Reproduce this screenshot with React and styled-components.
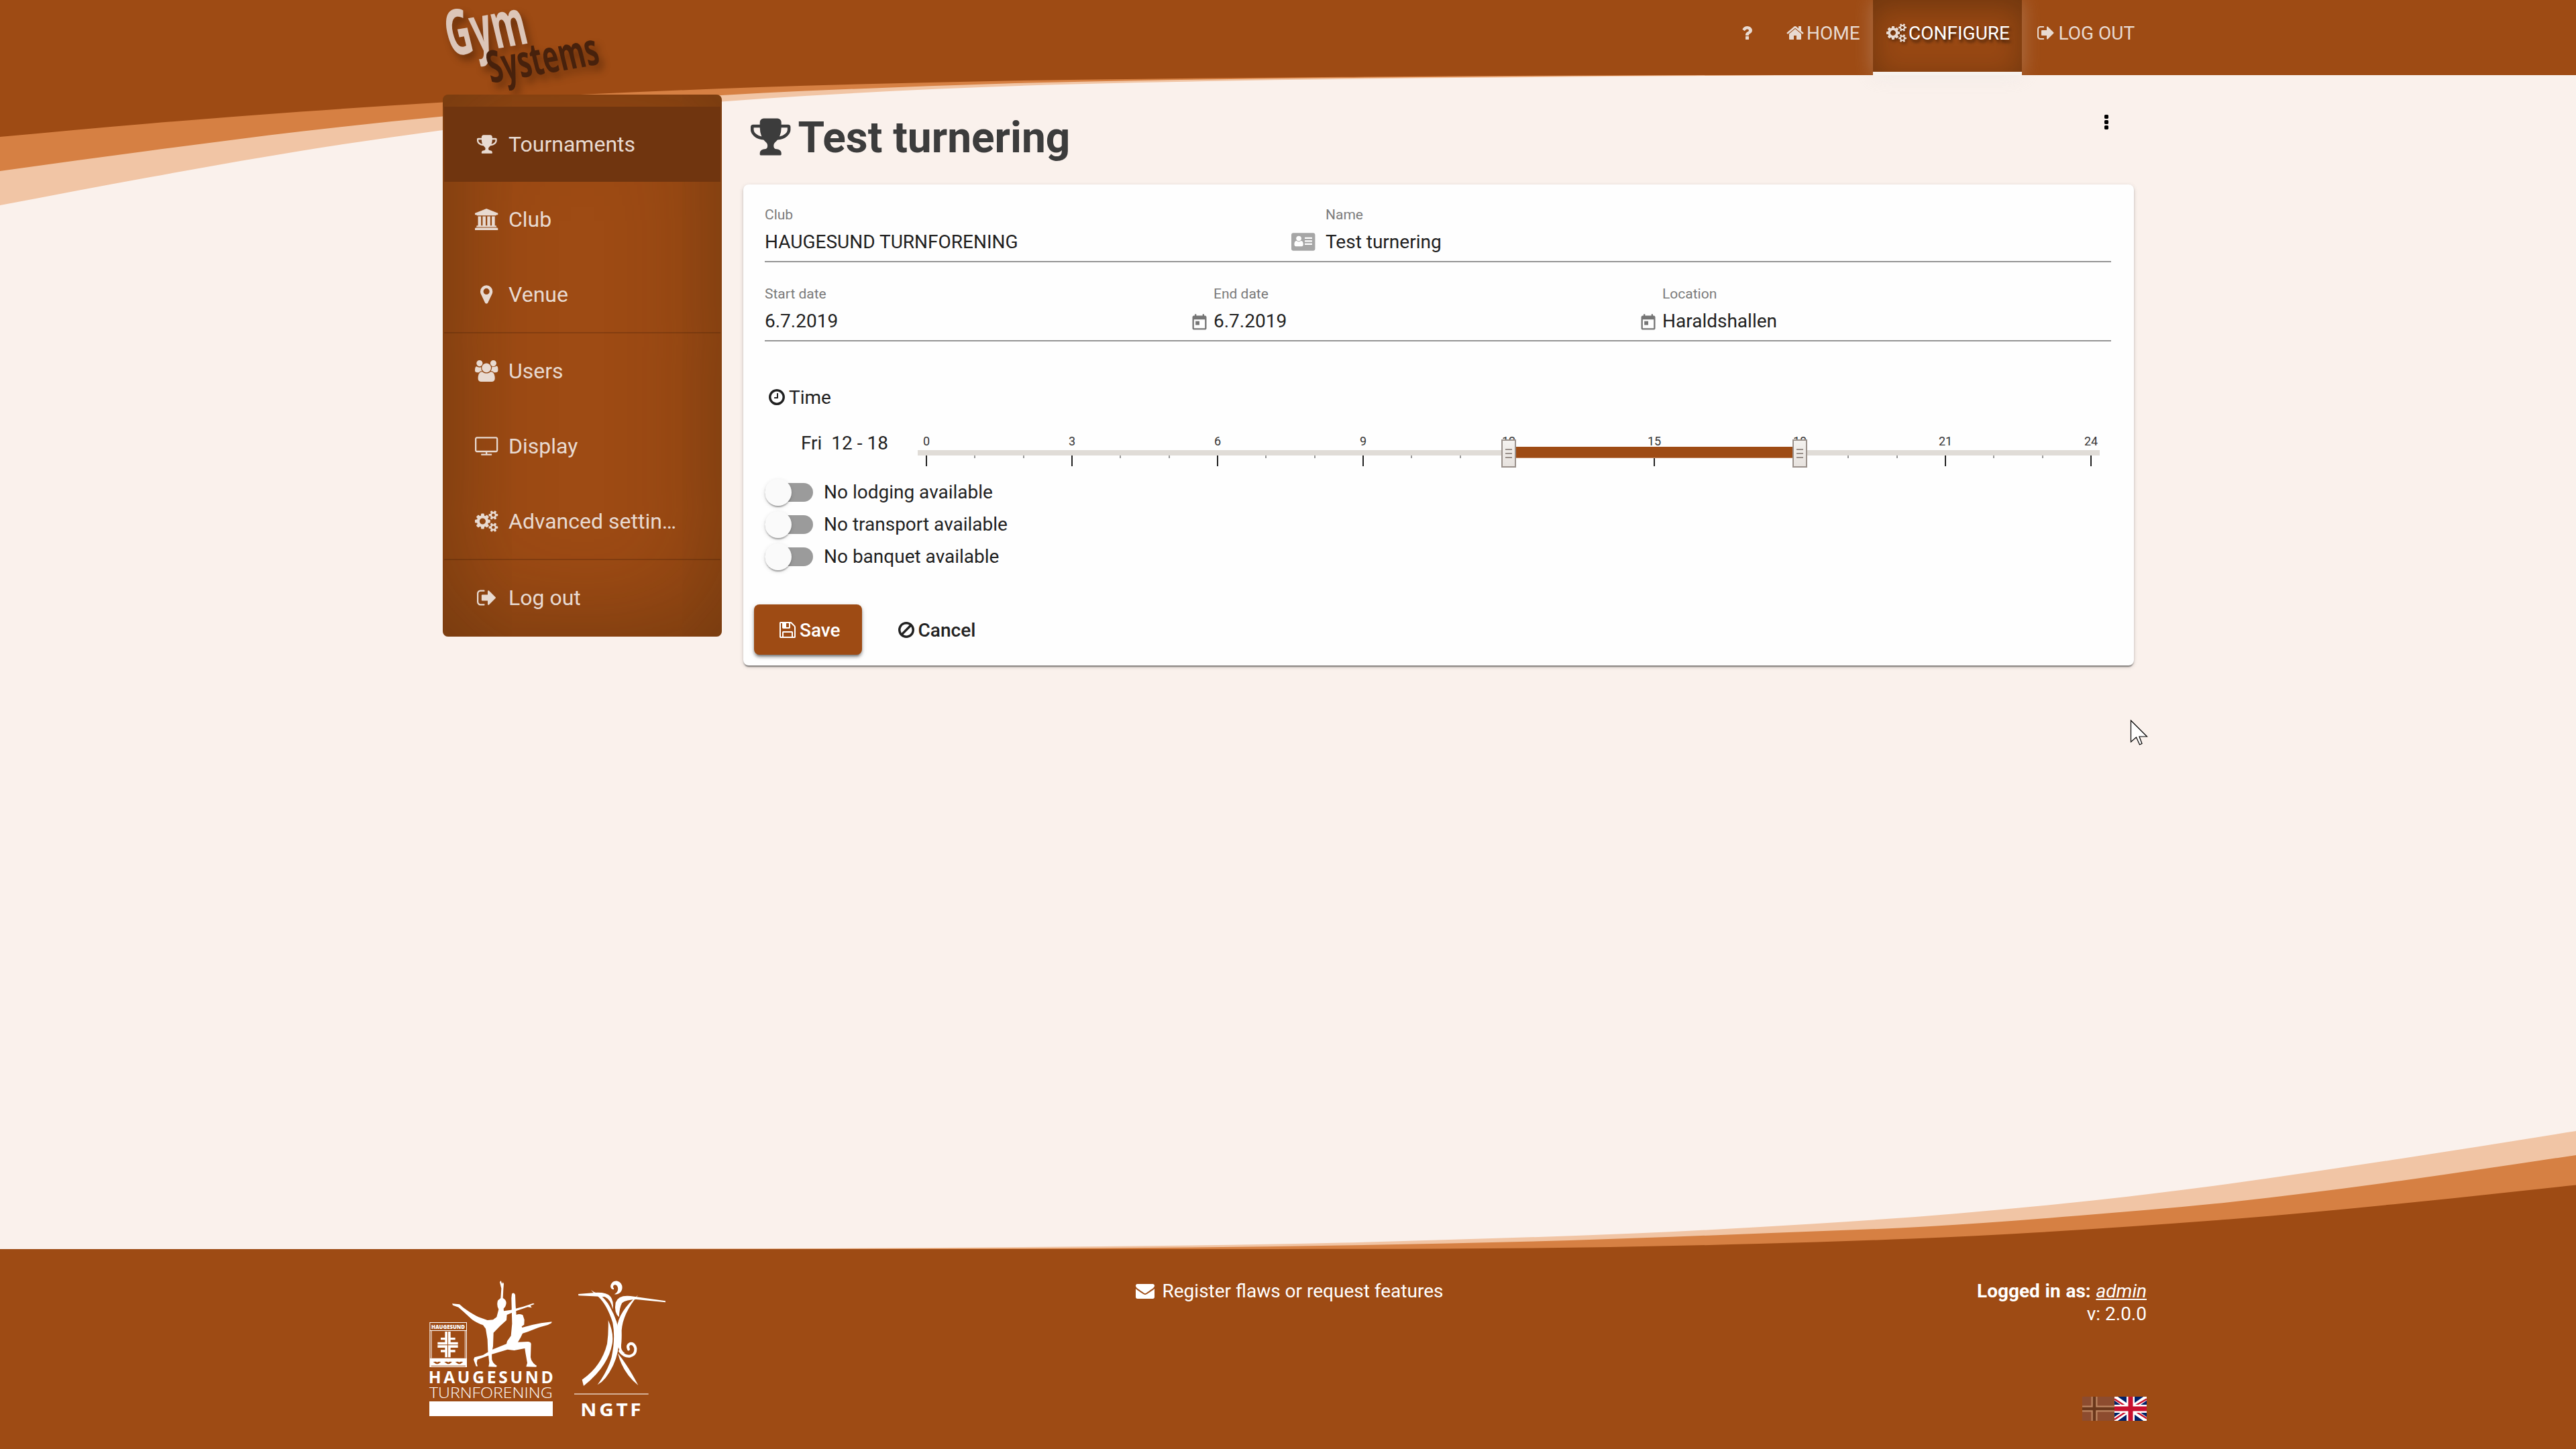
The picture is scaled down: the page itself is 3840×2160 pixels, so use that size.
import React from "react";
import styled, { createGlobalStyle, css } from "styled-components";

const color = {
  primary: "#9e4b14",
  mid: "#d68043",
  light: "#f1c5a5",
  page: "#faf1ec",
  onPrimary: "#e8dad1",
  text: "#212121",
};

const GlobalStyle = createGlobalStyle`
  * { box-sizing: border-box; }
  body {
    margin: 0;
    background: ${color.page};
    font-family: Roboto, "Liberation Sans", sans-serif;
    font-size: 28px;
    line-height: 34px;
    color: ${color.text};
    overflow: hidden;
  }
`;

/* ---------- icons ---------- */

const GLYPHS = {
  trophy: [64, 1664, "M522 883q-74-162-74-371h-256v96q0 78 94.5 162t235.5 113zm1078-275v-96h-256q0 209-74 371 141-29 235.5-113t94.5-162zm128-128v128q0 71-41.5 143t-112 130-173 97.5-215.5 44.5q-42 54-95 95-38 34-52.5 72.5t-14.5 89.5q0 54 30.5 91t97.5 37q75 0 133.5 45.5t58.5 114.5v64q0 14-9 23t-23 9h-832q-14 0-23-9t-9-23v-64q0-69 58.5-114.5t133.5-45.5q67 0 97.5-37t30.5-91q0-51-14.5-89.5t-52.5-72.5q-53-41-95-95-113-5-215.5-44.5t-173-97.5-112-130-41.5-143v-128q0-40 28-68t68-28h288v-96q0-66 47-113t113-47h576q66 0 113 47t47 113v96h288q40 0 68 28t28 68z"],
  bank: [0, 1920, "M960 0l960 384v128h-128q0 26-20.5 45t-48.5 19h-1526q-28 0-48.5-19t-20.5-45h-128v-128zm-704 640h256v768h128v-768h256v768h128v-768h256v768h128v-768h256v768h59q28 0 48.5 19t20.5 45v64h-1664v-64q0-26 20.5-45t48.5-19h59v-768zm1595 960q28 0 48.5 19t20.5 45v128h-1920v-128q0-26 20.5-45t48.5-19h1782z"],
  marker: [384, 1024, "M1152 640q0-106-75-181t-181-75-181 75-75 181 75 181 181 75 181-75 75-181zm256 0q0 109-33 179l-364 774q-16 33-47.5 52t-67.5 19-67.5-19-46.5-52l-365-774q-33-70-33-179 0-212 150-362t362-150 362 150 150 362z"],
  users: [64, 1920, "M657 896q-162 5-265 128h-134q-82 0-138-40.5t-56-118.5q0-353 124-353 6 0 43.5 21t97.5 42.5 119 21.5q67 0 133-23-5 37-5 66 0 159 93 293zm1071 637q0 120-73 189.5t-194 69.5h-874q-121 0-194-69.5t-73-189.5q0-53 3.5-103.5t14-109 26.5-108.5 43-97.5 62-81 85.5-53.5 111.5-20q10 0 43 21.5t73 48 107 48 135 21.5 135-21.5 107-48 73-48 43-21.5q61 0 111.5 20t85.5 53.5 62 81 43 97.5 26.5 108.5 14 109 3.5 103.5zm-1024-1277q0 106-75 181t-181 75-181-75-75-181 75-181 181-75 181 75 75 181zm704 384q0 159-112.5 271.5t-271.5 112.5-271.5-112.5-112.5-271.5 112.5-271.5 271.5-112.5 271.5 112.5 112.5 271.5zm576 225q0 78-56 118.5t-138 40.5h-134q-103-123-265-128 93-134 93-293 0-29-5-66 66 23 133 23 59 0 119-21.5t97.5-42.5 43.5-21q124 0 124 353zm-128-609q0 106-75 181t-181 75-181-75-75-181 75-181 181-75 181 75 75 181z"],
  tv: [0, 1920, "M1792 1248v-960q0-13-9.5-22.5t-22.5-9.5h-1600q-13 0-22.5 9.5t-9.5 22.5v960q0 13 9.5 22.5t22.5 9.5h1600q13 0 22.5-9.5t9.5-22.5zm128-960v960q0 66-47 113t-113 47h-736v128h352q14 0 23 9t9 23v64q0 14-9 23t-23 9h-832q-14 0-23-9t-9-23v-64q0-14 9-23t23-9h352v-128h-736q-66 0-113-47t-47-113v-960q0-66 47-113t113-47h1600q66 0 113 47t47 113z"],
  cogs: [0, 1920, "M896 896q0-106-75-181t-181-75-181 75-75 181 75 181 181 75 181-75 75-181zm768 512q0-52-38-90t-90-38-90 38-38 90q0 53 37.5 90.5t90.5 37.5 90.5-37.5 37.5-90.5zm0-1024q0-52-38-90t-90-38-90 38-38 90q0 53 37.5 90.5t90.5 37.5 90.5-37.5 37.5-90.5zm-384 421v185q0 10-7 19.5t-16 10.5l-155 24q-11 35-32 76 34 48 90 115 7 11 7 20 0 12-7 19-23 30-82.5 89.5t-78.5 59.5q-11 0-21-7l-115-90q-37 19-77 31-11 108-23 155-7 24-30 24h-186q-11 0-20-7.5t-10-17.5l-23-153q-34-10-75-31l-118 89q-7 7-20 7-11 0-21-8-144-133-144-160 0-9 7-19 10-14 41-53t47-61q-23-44-35-82l-152-24q-10-1-17-9.5t-7-19.5v-185q0-10 7-19.5t16-10.5l155-24q11-35 32-76-34-48-90-115-7-11-7-20 0-12 7-20 22-30 82-89t79-59q11 0 21 7l115 90q34-18 77-32 11-108 23-154 7-24 30-24h186q11 0 20 7.5t10 17.5l23 153q34 10 75 31l118-89q8-7 20-7 11 0 21 8 144 133 144 160 0 8-7 19-12 16-42 54t-45 60q23 48 34 82l152 23q10 2 17 10.5t7 19.5zm640 533v140q0 16-149 31-12 27-30 52 51 113 51 138 0 4-4 7-122 71-124 71-8 0-46-47t-52-68q-20 2-30 2t-30-2q-14 21-52 68t-46 47q-2 0-124-71-4-3-4-7 0-25 51-138-18-25-30-52-149-15-149-31v-140q0-16 149-31 13-29 30-52-51-113-51-138 0-4 4-7 4-2 35-20t59-34 30-16q8 0 46 46.5t52 67.5q20-2 30-2t30 2q51-71 92-112l6-2q4 0 124 70 4 3 4 7 0 25-51 138 17 23 30 52 149 15 149 31zm0-1024v140q0 16-149 31-12 27-30 52 51 113 51 138 0 4-4 7-122 71-124 71-8 0-46-47t-52-68q-20 2-30 2t-30-2q-14 21-52 68t-46 47q-2 0-124-71-4-3-4-7 0-25 51-138-18-25-30-52-149-15-149-31v-140q0-16 149-31 13-29 30-52-51-113-51-138 0-4 4-7 4-2 35-20t59-34 30-16q8 0 46 46.5t52 67.5q20-2 30-2t30 2q51-71 92-112l6-2q4 0 124 70 4 3 4 7 0 25-51 138 17 23 30 52 149 15 149 31z"],
  signOut: [64, 1664, "M704 1440q0 4 1 20t.5 26.5-3 23.5-10 19.5-20.5 6.5h-320q-119 0-203.5-84.5t-84.5-203.5v-704q0-119 84.5-203.5t203.5-84.5h320q13 0 22.5 9.5t9.5 22.5q0 4 1 20t.5 26.5-3 23.5-10 19.5-20.5 6.5h-320q-66 0-113 47t-47 113v704q0 66 47 113t113 47h312l11.5 1 11.5 3 8 5.5 7 9 2 13.5zm928-544q0 26-19 45l-544 544q-19 19-45 19t-45-19-19-45v-288h-448q-26 0-45-19t-19-45v-384q0-26 19-45t45-19h448v-288q0-26 19-45t45-19 45 19l544 544q19 19 19 45z"],
  home: [64, 1664, "M1472 992v480q0 26-19 45t-45 19h-384v-384h-256v384h-384q-26 0-45-19t-19-45v-480q0-1 .5-3t.5-3l575-474 575 474q1 2 1 6zm223-69l-62 74q-8 9-21 11h-3q-13 0-21-7l-692-577-692 577q-12 8-24 7-13-2-21-11l-62-74q-8-10-7-23.5t11-21.5l719-599q32-26 76-26t76 26l244 204v-195q0-14 9-23t23-9h192q14 0 23 9t9 23v408l219 182q10 8 11 21.5t-7 23.5z"],
  question: [384, 1024, "M1088 1256v240q0 16-12 28t-28 12h-240q-16 0-28-12t-12-28v-240q0-16 12-28t28-12h240q16 0 28 12t12 28zm316-600q0 54-15.5 101t-35 76.5-55 59.5-57.5 43.5-61 35.5q-41 23-68.5 65t-27.5 67q0 17-12 32.5t-28 15.5h-240q-15 0-25.5-18.5t-10.5-37.5v-45q0-83 65-156.5t143-108.5q59-27 84-56t25-76q0-42-46.5-74t-107.5-32q-65 0-108 29-35 25-107 115-13 16-31 16-12 0-25-8l-164-125q-13-10-15.5-25t5.5-28q160-266 464-266 80 0 161 31t146 83 106 127.5 41 158.5z"],
  clock: [128, 1536, "M1024 544v448q0 14-9 23t-23 9h-320q-14 0-23-9t-9-23v-64q0-14 9-23t23-9h224v-352q0-14 9-23t23-9h64q14 0 23 9t9 23zm416 352q0-148-73-273t-198-198-273-73-273 73-198 198-73 273 73 273 198 198 273 73 273-73 198-198 73-273zm224 0q0 209-103 385.5t-279.5 279.5-385.5 103-385.5-103-279.5-279.5-103-385.5 103-385.5 279.5-279.5 385.5-103 385.5 103 279.5 279.5 103 385.5z"],
  save: [128, 1536, "M512 1536h768v-384h-768v384zm896 0h128v-896q0-14-10-38.5t-20-34.5l-281-281q-10-10-34-20t-39-10v416q0 40-28 68t-68 28h-576q-40 0-68-28t-28-68v-416h-128v1280h128v-416q0-40 28-68t68-28h832q40 0 68 28t28 68v416zm-384-928v-320q0-13-9.5-22.5t-22.5-9.5h-192q-13 0-22.5 9.5t-9.5 22.5v320q0 13 9.5 22.5t22.5 9.5h192q13 0 22.5-9.5t9.5-22.5zm640 32v928q0 40-28 68t-68 28h-1344q-40 0-68-28t-28-68v-1344q0-40 28-68t68-28h928q40 0 88 20t76 48l280 280q28 28 48 76t20 88z"],
  ban: [128, 1536, "M1440 893q0-161-87-295l-754 753q137 89 297 89 111 0 211.5-43.5t173.5-116.5 116-174.5 43-212.5zm-999 299l755-754q-135-91-300-91-148 0-273 73t-198 199-73 274q0 162 89 299zm1223-299q0 157-61 300t-163.5 246-245 164-298.5 61-298.5-61-245-164-163.5-246-61-300 61-299.5 163.5-245.5 245-164 298.5-61 298.5 61 245 164 163.5 245.5 61 299.5z"],
  envelope: [0, 1792, "M1792 710v794q0 66-47 113t-113 47h-1472q-66 0-113-47t-47-113v-794q44 49 101 87 362 246 497 345 57 42 92.5 65.5t94.5 48 110 24.5h2q51 0 110-24.5t94.5-48 92.5-65.5q170-123 498-345 57-39 100-87zm0-294q0 79-49 151t-122 123q-376 261-468 325-10 7-42.5 31t-54 38.5-52 32.5-57.5 27-50 9h-2q-23 0-50-9t-57.5-27-52-32.5-54-38.5-42.5-31q-91-64-262-182.5t-205-142.5q-62-42-117-115.5t-55-136.5q0-78 41.5-130t118.5-52h1472q65 0 112.5 47t47.5 113z"],
  card: [0, 2048, "M1024 1131q0-64-9-117.5t-29.5-103-60.5-78-97-28.5q-6 4-30 18t-37.5 21.5-35.5 17.5-43 14.5-42 4.5-42-4.5-43-14.5-35.5-17.5-37.5-21.5-30-18q-57 0-97 28.5t-60.5 78-29.5 103-9 117.5 37 106.5 91 42.5h512q54 0 91-42.5t37-106.5zm-157-520q0-94-66.5-160.5t-160.5-66.5-160.5 66.5-66.5 160.5 66.5 160.5 160.5 66.5 160.5-66.5 66.5-160.5zm925 509v-64q0-14-9-23t-23-9h-576q-14 0-23 9t-9 23v64q0 14 9 23t23 9h576q14 0 23-9t9-23zm0-260v-56q0-15-10.5-25.5t-25.5-10.5h-568q-15 0-25.5 10.5t-10.5 25.5v56q0 15 10.5 25.5t25.5 10.5h568q15 0 25.5-10.5t10.5-25.5zm0-252v-64q0-14-9-23t-23-9h-576q-14 0-23 9t-9 23v64q0 14 9 23t23 9h576q14 0 23-9t9-23zm256-320v1216q0 66-47 113t-113 47h-1728q-66 0-113-47t-47-113v-1216q0-66 47-113t113-47h1728q66 0 113 47t47 113z"],
  dots: [704, 384, "M1088 1248v192q0 40-28 68t-68 28h-192q-40 0-68-28t-28-68v-192q0-40 28-68t68-28h192q40 0 68 28t28 68zm0-512v192q0 40-28 68t-68 28h-192q-40 0-68-28t-28-68v-192q0-40 28-68t68-28h192q40 0 68 28t28 68zm0-512v192q0 40-28 68t-68 28h-192q-40 0-68-28t-28-68v-192q0-40 28-68t68-28h192q40 0 68 28t28 68z"],
};

const Glyph = styled.svg`
  height: 1em;
  width: ${(p) => p.$w / 1792}em;
  vertical-align: -0.143em;
  fill: currentColor;
  overflow: visible;
  flex: none;
`;

function Icon({ name, ...rest }) {
  const [x, w, d] = GLYPHS[name];
  return (
    <Glyph $w={w} viewBox={`${x} 0 ${w} 1792`} {...rest}>
      <path d={d} />
    </Glyph>
  );
}

/* ---------- background waves ---------- */

const Wave = styled.svg`
  position: absolute;
  left: 0;
  width: 3840px;
  pointer-events: none;
  ${(p) => (p.$bottom ? css`bottom: 0; height: 500px;` : css`top: 0; height: 320px;`)}
`;

// Smooth curve through the given points.
function curve(points) {
  let d = `L${points[0][0]} ${points[0][1]}`;
  for (let i = 0; i < points.length - 1; i++) {
    const p0 = points[i - 1] || points[i];
    const p1 = points[i];
    const p2 = points[i + 1];
    const p3 = points[i + 2] || p2;
    const h = (p2[0] - p1[0]) / 3;
    const m1 = (p2[1] - p0[1]) / (p2[0] - p0[0]);
    const m2 = (p3[1] - p1[1]) / (p3[0] - p1[0]);
    d += `C${p1[0] + h} ${p1[1] + m1 * h} ${p2[0] - h} ${p2[1] - m2 * h} ${p2[0]} ${p2[1]}`;
  }
  return d;
}

const TOP_WAVES = [
  [color.light, [[0, 306], [224, 264], [448, 225], [660, 194], [865, 169.5], [1076, 151.5], [1200, 143], [1400, 132.5], [1600, 125.5], [1800, 121], [2000, 118], [2200, 115.7], [2500, 113.3], [2750, 112]]],
  [color.mid, [[0, 255], [224, 224.5], [448, 196], [660, 173.5], [865, 156], [1076, 142], [1200, 135.5], [1500, 124.5], [1700, 120], [2000, 116], [2400, 113], [2650, 112]]],
  [color.primary, [[0, 204], [224, 184], [448, 166.5], [660, 152.5], [865, 141], [1076, 132], [1200, 127.7], [1500, 120.5], [1700, 117.7], [2000, 114.7], [2300, 112.8], [2550, 112]]],
];

const BOTTOM_WAVES = [
  [color.light, [[600, 1862], [1200, 1861], [1640, 1858], [2000, 1852.5], [2426, 1839], [2700, 1824.5], [2917, 1809], [3120, 1789.5], [3324, 1764.5], [3580, 1727], [3840, 1686]]],
  [color.mid, [[900, 1862], [1640, 1860.5], [2000, 1856.5], [2340, 1849], [2640, 1838], [2870, 1828.5], [3100, 1812], [3324, 1792], [3580, 1760], [3840, 1722]]],
  [color.primary, [[1900, 1862], [2145, 1861.5], [2400, 1859], [2622, 1854], [2850, 1846.5], [3040, 1837], [3324, 1817.5], [3580, 1794], [3840, 1766.5]]],
];

/* ---------- header ---------- */

const Page = styled.div`
  position: relative;
  width: 3840px;
  height: 2160px;
  display: grid;
  grid-template-rows: 112px 1fr 298px;
  background: ${color.page};
  overflow: hidden;
`;

const Header = styled.header`
  position: relative;
  background: ${color.primary};
`;

const HeaderInner = styled.div`
  width: 2560px;
  height: 112px;
  margin: 0 auto;
  display: flex;
  justify-content: space-between;
`;

const Logo = styled.svg`
  width: 280px;
  height: 150px;
  margin-left: 10px;
  overflow: visible;
  filter: drop-shadow(6px 8px 6px rgba(40, 15, 0, 0.45));
  font-family: "Open Sans", "Noto Sans", sans-serif;
  font-weight: 700;
`;

const Nav = styled.nav`
  display: flex;
`;

const Tab = styled.a`
  width: ${(p) => p.$width}px;
  height: 112px;
  padding: 33px 0 0 ${(p) => p.$padLeft || 20}px;
  white-space: nowrap;
  color: ${color.onPrimary};
  ${(p) => p.$active && css`
    position: relative;
    background: #984813;
    border-bottom: 5px solid #f7f2ee;
    box-shadow: inset 0 10px 44px rgba(30, 20, 5, 0.34), 0 0 28px rgba(220, 220, 220, 0.3);
    text-shadow: 2px 4px 4px rgba(0, 0, 0, 0.6);
    svg { filter: drop-shadow(2px 3px 2px rgba(0, 0, 0, 0.35)); }
  `}
`;

const TabText = styled.span`
  margin-left: ${(p) => p.$gap}px;
  color: ${(p) => (p.$active ? "#fff" : "inherit")};
`;

/* ---------- main ---------- */

const Main = styled.main`
  position: relative;
  width: 2560px;
  margin: 0 auto;
  padding: 29px 19px 0 20px;
  display: flex;
  align-items: flex-start;
  gap: 32px;
`;

const Sidebar = styled.aside`
  width: 416px;
  padding: 18px 2px 2px;
  border-radius: 8px;
  background: ${color.primary};
  box-shadow: inset 0 0 160px rgba(45, 30, 8, 0.45);
`;

const MenuItem = styled.a`
  height: 112px;
  padding-left: 43px;
  display: flex;
  align-items: center;
  font-size: 32px;
  color: ${color.onPrimary};
  background: ${(p) => (p.$active ? "#70350f" : "transparent")};
`;

const MenuIcon = styled.span`
  width: 41px;
  margin-right: 12px;
  text-align: center;
`;

const MenuDivider = styled.hr`
  height: 2px;
  margin: 0;
  border: 0;
  background: rgba(60, 25, 5, 0.25);
`;

const Content = styled.section`
  flex: 1;
`;

const TitleRow = styled.div`
  height: 134px;
  padding: 27px 38px 0 11px;
  display: flex;
  justify-content: space-between;
`;

const Title = styled.h1`
  margin: 0;
  font-size: 64px;
  line-height: 75px;
  font-weight: 700;
  color: #3c3c3c;
  svg { margin-right: 11px; }
`;

const MoreButton = styled.span`
  height: 28px;
  line-height: 32px;
  color: #000;
`;

const Card = styled.div`
  height: 717px;
  padding: 33px 34px 16px 32px;
  border-radius: 8px;
  background: #fefefe;
  box-shadow: 0 4px 2px -2px rgba(0, 0, 0, 0.3), 0 2px 2px rgba(0, 0, 0, 0.2), 0 2px 6px rgba(0, 0, 0, 0.16);
`;

const FieldRow = styled.div`
  height: 83px;
  margin-bottom: 35px;
  border-bottom: 2px solid #949494;
  display: grid;
  grid-template-columns: ${(p) => p.$columns};
`;

const Field = styled.label`
  display: grid;
  grid-template-columns: 1fr auto;
  grid-template-rows: 25px 1fr;
`;

const FieldLabel = styled.span`
  grid-column: 1 / -1;
  font-size: 21px;
  line-height: 25px;
  color: #7b7b7b;
`;

const FieldValue = styled.span`
  padding-top: 11px;
`;

const FieldIcon = styled.span`
  padding-top: ${(p) => p.$top}px;
  padding-right: ${(p) => p.$right}px;
  font-size: ${(p) => p.$size}px;
  line-height: 0;
  color: ${(p) => p.$color};
`;

const TodaySvg = styled.svg`
  width: 28px;
  height: 28px;
  fill: #757575;
`;

const SectionTitle = styled.div`
  padding: 32px 0 0 6px;
  height: 67px;
  white-space: pre;
  svg { margin-right: 6px; }
`;

const SliderRow = styled.div`
  height: 99px;
  display: flex;
`;

const DayLabel = styled.div`
  width: 228px;
  padding: 33px 0 0 54px;
  white-space: pre;
`;

const Slider = styled.svg`
  width: 1762px;
  height: 69px;
  margin-top: 29px;
  overflow: visible;
  font-size: 18px;
`;

const SwitchRow = styled.div`
  height: 48px;
  display: flex;
  align-items: center;
  gap: 16px;
`;

const SwitchBar = styled.span`
  width: 72px;
  height: 28px;
  border-radius: 14px;
  background: #9b9b9b;
  display: flex;
  align-items: center;
`;

const SwitchThumb = styled.span`
  width: 40px;
  height: 40px;
  border-radius: 50%;
  background: #fafafa;
  flex: none;
  box-shadow: 0 4px 2px -2px rgba(0, 0, 0, 0.2), 0 2px 2px rgba(0, 0, 0, 0.14), 0 2px 6px rgba(0, 0, 0, 0.12);
`;

const Actions = styled.div`
  margin: 47px 0 0 -16px;
  display: flex;
  gap: 16px;
`;

const Button = styled.button`
  height: 75px;
  padding: 3px 32px 0 38px;
  border: 0;
  border-radius: 8px;
  font: 500 28px/34px Roboto, "Liberation Sans", sans-serif;
  color: ${(p) => (p.$primary ? "#fff" : color.text)};
  background: ${(p) => (p.$primary ? color.primary : "transparent")};
  box-shadow: ${(p) => (p.$primary ? "0 6px 2px -4px rgba(0,0,0,.2), 0 4px 4px rgba(0,0,0,.14), 0 2px 10px rgba(0,0,0,.12), 0 3px 4px rgba(0,0,0,.2)" : "none")};
  svg { margin-right: 6px; }
`;

/* ---------- footer ---------- */

const Footer = styled.footer`
  position: relative;
`;

const FooterInner = styled.div`
  width: 2560px;
  height: 298px;
  margin: 0 auto;
  padding: 47px 0 0;
  display: grid;
  grid-template-columns: 1fr 1fr 1fr;
  color: #fff;
`;

const Sponsors = styled.div`
  display: flex;
  gap: 32px;
  font-family: "Open Sans", "Noto Sans", sans-serif;
`;

const SponsorLogo = styled.svg`
  width: ${(p) => p.$width}px;
  height: 202px;
  fill: #fff;
  overflow: visible;
`;

const Feedback = styled.div`
  margin-top: -1px;
  padding-left: 4px;
  text-align: center;
  svg { margin-right: 12px; }
`;

const Account = styled.div`
  margin-top: -1px;
  display: flex;
  flex-direction: column;
  align-items: flex-end;
`;

const LoggedIn = styled.b`
  word-spacing: 0.8px;
`;

const UserLink = styled.a`
  font-style: italic;
  font-weight: 400;
  text-decoration: underline;
`;

const Flags = styled.div`
  display: flex;
  margin-top: 106px;
`;

const Flag = styled.svg`
  width: 48px;
  height: 36px;
  opacity: ${(p) => (p.$inactive ? 0.32 : 1)};
`;

const Cursor = styled.svg`
  position: absolute;
  left: 3175px;
  top: 1072px;
  width: 28px;
  height: 40px;
`;

/* ---------- parts ---------- */

function Today() {
  return (
    <TodaySvg viewBox="0 0 24 24">
      <path d="M19 3h-1V1h-2v2H8V1H6v2H5c-1.11 0-1.99.9-1.99 2L3 19c0 1.1.89 2 2 2h14c1.1 0 2-.9 2-2V5c0-1.1-.9-2-2-2zm0 16H5V8h14v11zM7 10h5v5H7z" />
    </TodaySvg>
  );
}

const TICK = 1736 / 24;

function HourSlider({ from, to }) {
  const x = (h) => 13 + h * TICK;
  const hours = Array.from({ length: 25 }, (_, h) => h);
  return (
    <Slider viewBox="0 0 1762 69">
      <defs>
        <linearGradient id="grip" x1="0" y1="0" x2="0" y2="1">
          <stop offset="0" stopColor="#f4f2ef" />
          <stop offset="1" stopColor="#e7e2de" />
        </linearGradient>
      </defs>
      {hours.map((h) => (
        <React.Fragment key={h}>
          {h % 3 === 0 && (
            <text x={x(h)} y="24" textAnchor="middle" fill="#333">{h}</text>
          )}
          <rect
            x={Math.round(x(h)) - 1}
            y="39"
            width="2"
            height={h % 3 === 0 ? 16 : 4}
            fill={h % 3 === 0 ? "#222" : "#9a9a9a"}
          />
        </React.Fragment>
      ))}
      <rect x="0" y="31" width="1762" height="8" fill="#e0dcd7" />
      <rect x={x(from)} y="26" width={x(to) - x(from)} height="16" fill={color.primary} />
      <rect x={x(from)} y="42" width={x(to) - x(from)} height="1" fill="#c38a66" />
      {[from, to].map((h) => (
        <g key={h} transform={`translate(${Math.round(x(h)) - 11} 15)`}>
          <rect x="1" y="1" width="20" height="40" fill="url(#grip)" stroke="#9a918b" strokeWidth="2" />
          <path d="M6 15h10M6 21h10M6 27h10" stroke="#9a918b" strokeWidth="2" />
        </g>
      ))}
    </Slider>
  );
}

function Switch({ children }) {
  return (
    <SwitchRow>
      <SwitchBar>
        <SwitchThumb />
      </SwitchBar>
      <span>{children}</span>
    </SwitchRow>
  );
}

function HaugesundLogo() {
  return (
    <SponsorLogo $width={184} viewBox="60 87 552 606">
      <path d="M162 190L195 193L212 208Q250 236 280 250L320 264L345 262L361 250L370 215Q360 200 366 176L379 165L382 122L375 94L380 87L385 101L389 94L393 101L391 125L389 165Q402 171 404 185Q404 200 392 212L393 223L425 218L480 203L525 188L530 192L512 199L518 208L500 205L450 222L407 240L405 264L376 290L347 320L345 380L339 410L340 440Q344 458 362 467L360 473L325 472L328 455L322 400L320 350L312 302L300 286Q270 275 250 260L215 228L190 206L165 197Z" />
      <path d="M429 146Q437 138 444 150L446 200L449 240Q462 233 478 241L485 262L484 284L473 292L475 297L520 285L560 277L608 271L606 277L590 285L550 296L500 316L477 323L468 342L456 362L500 360Q514 361 515 370L513 430Q518 456 540 467L538 473L493 472L498 455L490 410L487 390L440 399L410 395L340 416L275 440L272 455L276 470L269 470L258 440L262 430L300 420L340 396L405 370L408 358L425 334L430 280L427 165Z" />
      <path d="M61 273h167v201h-167zM64 276v33h161v-33zM64 312v122h161v-122zM68 467v3h154v-3z" fillRule="evenodd" />
      <path d="M69 312v122M220 312v122" stroke="#fff" strokeWidth="3" />
      <text x="69" y="302" fontSize="25" fontWeight="800" textLength="150" lengthAdjust="spacingAndGlyphs">HAUGESUND</text>
      <path d="M130 315h11v58h-44v-11h33v-10h-19v-10h19zM155 315h-11v58h44v-11h-33v-10h21v-10h-21zM130 430h11v-54h-44v11h33v10h-19v10h19zM155 430h-11v-54h44v11h-33v10h21v10h-21z" />
      <path d="M77 452q9-6 18 0q9-6 17 0q-6 2-10 6q-7 3-14 0q-4-5-11-6zM127 452q9-6 18 0q9-6 17 0q-6 2-10 6q-7 3-14 0q-4-5-11-6zM176 452q9-6 18 0q9-6 17 0q-6 2-10 6q-7 3-14 0q-4-5-11-6z" fill={color.primary} />
      <text x="56" y="547" fontSize="74" fontWeight="700" textLength="558" lengthAdjust="spacing">HAUGESUND</text>
      <text x="60" y="613" fontSize="67" fontWeight="300" textLength="551" lengthAdjust="spacingAndGlyphs">TURNFORENING</text>
      <path d="M60 627h552v66H60z" />
    </SponsorLogo>
  );
}

function NgtfLogo() {
  return (
    <SponsorLogo $width={136} viewBox="708 87 408 606">
      <path d="M876 98C888 82 914 86 922 110C926 132 912 150 887 148C903 140 908 124 900 111C893 101 880 105 882 118Q887 120 885 127C870 126 866 110 876 98Z" />
      <path d="M726 147L800 141Q852 138 870 158Q886 178 880 215Q872 172 845 160Q800 157 727 154Z" />
      <path d="M783 129Q795 140 815 145Q850 170 868 205Q906 272 908 330Q912 405 880 470Q850 532 812 553Q858 490 875 430Q893 345 880 275Q855 195 815 158Q795 145 783 129Z" />
      <path d="M1116 178L960 156Q905 150 893 185Q885 230 908 250Q911 205 922 187Q940 172 985 171L1116 184Z" />
      <path d="M994 151Q925 235 920 310Q921 350 918 375Q915 400 935 412L915 410Q895 370 899 300Q905 225 994 151Z" />
      <path d="M860 264Q886 320 878 370Q860 470 750 558L743 530Q830 470 855 370Q862 320 860 264Z" />
      <path d="M903 412Q950 470 994 555Q925 500 903 412Z" />
      <path d="M912 402Q930 426 955 425Q984 419 982 390Q976 366 958 369Q943 376 951 394" fill="none" stroke="#fff" strokeWidth="12" strokeLinecap="round" />
      <path d="M708 594h332" stroke="#d5ae94" strokeWidth="6" />
      <text x="736" y="692" fontSize="81" fontWeight="700" textLength="282" lengthAdjust="spacingAndGlyphs" letterSpacing="10">NGTF</text>
    </SponsorLogo>
  );
}

const MENU = [
  ["trophy", "Tournaments", true],
  ["bank", "Club"],
  ["marker", "Venue"],
  null,
  ["users", "Users"],
  ["tv", "Display"],
  ["cogs", "Advanced settin…"],
  null,
  ["signOut", "Log out"],
];

export default function App() {
  return (
    <Page>
      <GlobalStyle />
      <Wave viewBox="0 0 3840 320">
        {TOP_WAVES.map(([fill, pts]) => (
          <path key={fill} fill={fill} d={`M0 0${curve(pts)}V0Z`} />
        ))}
      </Wave>
      <Wave $bottom viewBox="0 1660 3840 500">
        {BOTTOM_WAVES.map(([fill, pts]) => (
          <path key={fill} fill={fill} d={`M${pts[0][0]} 2160${curve(pts)}V2160Z`} />
        ))}
        <path fill={color.primary} d="M0 1862H3840V2160H0Z" />
      </Wave>

      <Header>
        <HeaderInner>
          <Logo viewBox="650 0 280 150">
            <text transform="translate(672 84) rotate(-9.5) skewX(4)" fontSize="95" fill="#dcc6b9" textLength="120" lengthAdjust="spacingAndGlyphs">Gym</text>
            <text transform="translate(732 124) rotate(-10) skewX(4)" fontSize="67" fill="#47210c" textLength="167" lengthAdjust="spacingAndGlyphs">Systems</text>
          </Logo>
          <Nav>
            <Tab $width={64} $padLeft={20}><Icon name="question" /></Tab>
            <Tab $width={152} $padLeft={23}><Icon name="home" /><TabText $gap={4}>HOME</TabText></Tab>
            <Tab $width={222} $active><Icon name="cogs" /><TabText $gap={3} $active>CONFIGURE</TabText></Tab>
            <Tab $width={186} $padLeft={23}><Icon name="signOut" /><TabText $gap={5.5}>LOG OUT</TabText></Tab>
          </Nav>
        </HeaderInner>
      </Header>

      <Main>
        <Sidebar>
          {MENU.map((item, i) =>
            item ? (
              <MenuItem key={i} $active={item[2]}>
                <MenuIcon><Icon name={item[0]} /></MenuIcon>
                <span>{item[1]}</span>
              </MenuItem>
            ) : (
              <MenuDivider key={i} />
            )
          )}
        </Sidebar>

        <Content>
          <TitleRow>
            <Title><Icon name="trophy" />Test turnering</Title>
            <MoreButton><Icon name="dots" /></MoreButton>
          </TitleRow>
          <Card>
            <FieldRow $columns="836px 1fr">
              <Field>
                <FieldLabel>Club</FieldLabel>
                <FieldValue>HAUGESUND TURNFORENING</FieldValue>
                <FieldIcon $top={12} $right={16} $size={31} $color="#a6a6a6"><Icon name="card" /></FieldIcon>
              </Field>
              <Field>
                <FieldLabel>Name</FieldLabel>
                <FieldValue>Test turnering</FieldValue>
              </Field>
            </FieldRow>
            <FieldRow $columns="1fr 1fr 1fr">
              <Field>
                <FieldLabel>Start date</FieldLabel>
                <FieldValue>6.7.2019</FieldValue>
                <FieldIcon $top={16} $right={7}><Today /></FieldIcon>
              </Field>
              <Field>
                <FieldLabel>End date</FieldLabel>
                <FieldValue>6.7.2019</FieldValue>
                <FieldIcon $top={16} $right={7}><Today /></FieldIcon>
              </Field>
              <Field>
                <FieldLabel>Location</FieldLabel>
                <FieldValue>Haraldshallen</FieldValue>
              </Field>
            </FieldRow>
            <SectionTitle><Icon name="clock" />Time</SectionTitle>
            <SliderRow>
              <DayLabel>Fri  12 - 18</DayLabel>
              <HourSlider from={12} to={18} />
            </SliderRow>
            <Switch>No lodging available</Switch>
            <Switch>No transport available</Switch>
            <Switch>No banquet available</Switch>
            <Actions>
              <Button $primary><Icon name="save" />Save</Button>
              <Button><Icon name="ban" />Cancel</Button>
            </Actions>
          </Card>
        </Content>
      </Main>

      <Footer>
        <FooterInner>
          <Sponsors>
            <HaugesundLogo />
            <NgtfLogo />
          </Sponsors>
          <Feedback><Icon name="envelope" />Register flaws or request features</Feedback>
          <Account>
            <LoggedIn>Logged in as: <UserLink>admin</UserLink></LoggedIn>
            <span>v: 2.0.0</span>
            <Flags>
              <Flag $inactive viewBox="0 0 48 36">
                <path fill="#6b4f6a" d="M0 0h48v36H0z" />
                <path stroke="#fff" strokeWidth="9" d="M18 0v36M0 18h48" />
                <path stroke="#00102a" strokeWidth="4.5" d="M18 0v36M0 18h48" />
              </Flag>
              <Flag viewBox="0 0 48 36">
                <path fill="#012169" d="M0 0h48v36H0z" />
                <path stroke="#fff" strokeWidth="7.5" d="M-6 -3L54 39M54 -3L-6 39" />
                <path stroke="#c8102e" strokeWidth="2.4" d="M0 3.5L18 15M48 32.5L30 21M48 3.5L30 14M0 34L18 22" />
                <path stroke="#fff" strokeWidth="12" d="M24 0v36M0 18h48" />
                <path stroke="#c8102e" strokeWidth="7" d="M24 0v36M0 18h48" />
              </Flag>
            </Flags>
          </Account>
        </FooterInner>
      </Footer>

      <Cursor viewBox="0 0 28 40">
        <path d="M1.5 2V34L9.5 27L14.5 38L18 36.5L14 26H25.5Z" fill="#fff" stroke="#000" strokeWidth="1.2" />
      </Cursor>
    </Page>
  );
}
